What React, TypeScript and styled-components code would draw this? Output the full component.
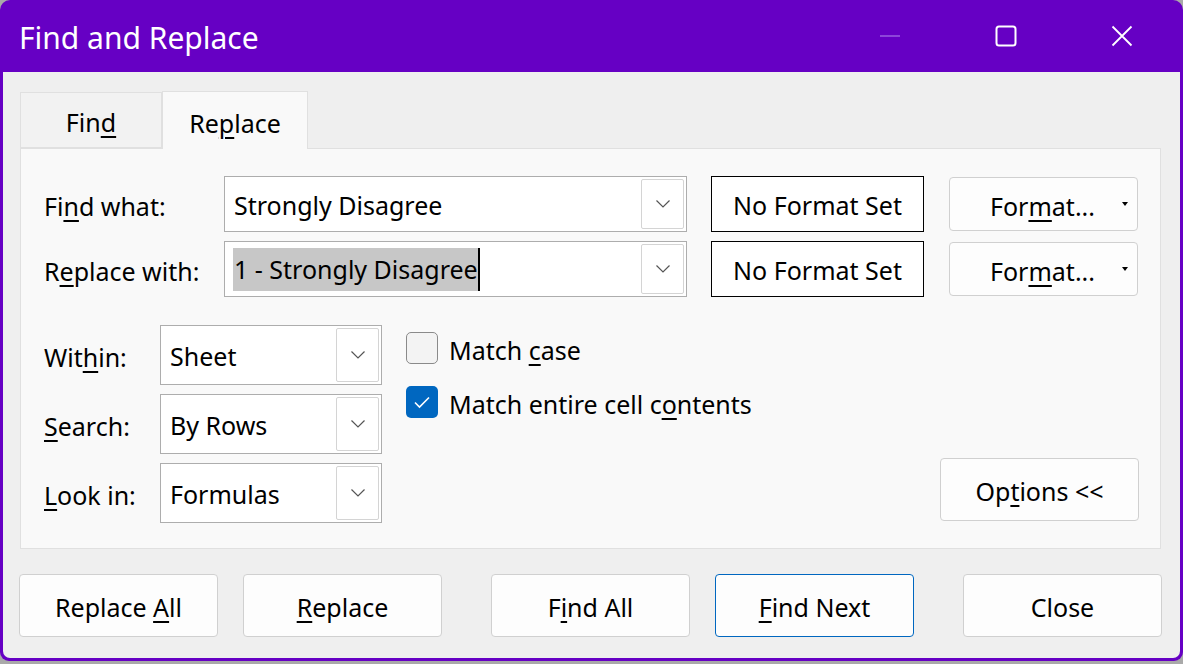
import React from "react";
import styled, { createGlobalStyle } from "styled-components";

const GlobalStyle = createGlobalStyle`
  html, body {
    margin: 0;
    padding: 0;
    background: #a9a9a9;
  }
  body {
    font-family: "Noto Sans", "Open Sans", sans-serif;
    color: #000;
  }
  * {
    box-sizing: border-box;
  }
`;

const Window = styled.div`
  width: 1183px;
  height: 661px;
  display: flex;
  flex-direction: column;
  background: #6600c4;
  border-radius: 10px 10px 9px 9px;
  padding: 0 3px 3px 3px;
`;

const TitleBar = styled.div`
  height: 72px;
  display: flex;
  align-items: center;
  color: #fff;
`;

const Title = styled.div`
  flex: 1;
  padding-left: 16px;
  padding-top: 2px;
  font-size: 30px;
`;

const ControlButton = styled.div`
  width: 116px;
  height: 72px;
  display: flex;
  align-items: center;
  justify-content: center;
  padding-bottom: 1px;
`;

const Body = styled.div`
  flex: 1;
  background: #efefef;
  border-radius: 0 0 7px 7px;
  padding: 19px 19px 0 17px;
  display: flex;
  flex-direction: column;
  font-size: 25px;
`;

const TabRow = styled.div`
  display: flex;
  align-items: flex-end;
  height: 57px;
`;

const Tab = styled.div<{ $active?: boolean }>`
  height: ${({ $active }) => ($active ? "58px" : "56px")};
  width: ${({ $active }) => ($active ? "146px" : "142px")};
  margin-bottom: ${({ $active }) => ($active ? "-1px" : "0")};
  position: relative;
  z-index: ${({ $active }) => ($active ? 1 : 0)};
  background: ${({ $active }) => ($active ? "#f9f9f9" : "#f2f2f2")};
  border: 1px solid #e0e0e0;
  border-bottom: ${({ $active }) => ($active ? "none" : "1px solid #e0e0e0")};
  display: flex;
  align-items: center;
  justify-content: center;
  padding-top: 4px;
`;

const Key = styled.u`
  text-decoration-thickness: 2px;
  text-underline-offset: 4px;
`;

const Panel = styled.div`
  height: 401px;
  background: #f9f9f9;
  border: 1px solid #e0e0e0;
  padding: 27px 21px 0 23px;
`;

const TopGrid = styled.div`
  display: grid;
  grid-template-columns: 156px 463px 213px 1fr;
  grid-auto-rows: 56px;
  column-gap: 24px;
  row-gap: 9px;
  align-items: center;
`;

const Label = styled.div`
  white-space: nowrap;
  padding-top: 3px;
`;

const Combo = styled.div<{ $height?: number }>`
  height: ${({ $height }) => $height ?? 56}px;
  background: #fff;
  border: 1px solid #adadad;
  display: flex;
  align-items: center;
  padding: 2px 2px 2px 9px;
`;

const ComboText = styled.div`
  flex: 1;
  white-space: nowrap;
  padding-top: 1px;
`;

const Selected = styled.span`
  display: inline-block;
  background: #c7c7c7;
  line-height: 43px;
  margin-left: -1px;
  padding-left: 1px;
  border-right: 2px solid #000;
`;

const DropButton = styled.div`
  width: 43px;
  height: 100%;
  border: 1px solid #d4d4d4;
  border-radius: 2px;
  display: flex;
  align-items: center;
  justify-content: center;
  background: #fff;
`;

const FormatBox = styled.div`
  height: 56px;
  border: 1px solid #000;
  background: #fff;
  display: flex;
  align-items: center;
  justify-content: center;
  padding-top: 2px;
  white-space: nowrap;
`;

const Button = styled.div<{ $width?: number; $height?: number; $primary?: boolean }>`
  width: ${({ $width }) => $width ?? 199}px;
  height: ${({ $height }) => $height ?? 63}px;
  background: #fdfdfd;
  border: 1px solid ${({ $primary }) => ($primary ? "#0067c0" : "#d0d0d0")};
  border-radius: 4px;
  display: flex;
  align-items: center;
  justify-content: center;
  padding-top: 3px;
  position: relative;
  white-space: nowrap;
`;

const FormatButton = styled(Button)`
  margin-left: 1px;
  padding-right: 2px;
`;

const Caret = styled.span`
  position: absolute;
  right: 9px;
  top: 24px;
  width: 0;
  height: 0;
  border-left: 3px solid transparent;
  border-right: 3px solid transparent;
  border-top: 4px solid #000;
`;

const LowerSection = styled.div`
  display: flex;
  margin-top: 28px;
`;

const OptionGrid = styled.div`
  display: grid;
  grid-template-columns: 116px 222px;
  grid-auto-rows: 60px;
  row-gap: 9px;
  align-items: center;
`;

const CheckList = styled.div`
  display: flex;
  flex-direction: column;
  gap: 22px;
  margin-left: 24px;
  padding-top: 7px;
`;

const CheckRow = styled.div`
  display: flex;
  align-items: center;
  gap: 11px;
  height: 32px;
  white-space: nowrap;
`;

const Box = styled.div<{ $checked?: boolean }>`
  width: 32px;
  height: 32px;
  border-radius: 5px;
  background: ${({ $checked }) => ($checked ? "#0067c0" : "#f3f3f3")};
  border: ${({ $checked }) => ($checked ? "none" : "1.5px solid #8a8a8a")};
  display: flex;
  align-items: center;
  justify-content: center;
`;

const CheckLabel = styled.span`
  padding-top: 3px;
`;

const OptionsButton = styled(Button)`
  margin-left: auto;
  align-self: flex-end;
  margin-bottom: 2px;
`;

const Footer = styled.div`
  display: flex;
  margin-top: 25px;
  margin-left: -1px;
  gap: 49px;
`;

const ButtonGroup = styled.div`
  display: flex;
  gap: 25px;
`;

const Chevron = () => (
  <svg width="16" height="10" viewBox="0 0 16 10">
    <path d="M1.5 1.5 L8 8 L14.5 1.5" fill="none" stroke="#555" strokeWidth="1.2" />
  </svg>
);

const Check = () => (
  <svg width="18" height="14" viewBox="0 0 18 14">
    <path d="M2 7.5 L6.5 12 L16 2.5" fill="none" stroke="#fff" strokeWidth="1.6" />
  </svg>
);

const Dropdown: React.FC<{ height?: number; children: React.ReactNode }> = ({ height, children }) => (
  <Combo $height={height}>
    <ComboText>{children}</ComboText>
    <DropButton>
      <Chevron />
    </DropButton>
  </Combo>
);

export default function App() {
  return (
    <>
      <GlobalStyle />
      <Window>
        <TitleBar>
          <Title>Find and Replace</Title>
          <ControlButton>
            <svg width="22" height="22" viewBox="0 0 22 22">
              <path d="M1 11 H21" stroke="#9b5ee0" strokeWidth="1.5" />
            </svg>
          </ControlButton>
          <ControlButton>
            <svg width="22" height="22" viewBox="0 0 22 22">
              <rect x="1.5" y="1.5" width="19" height="19" rx="2.5" fill="none" stroke="#fff" strokeWidth="2" />
            </svg>
          </ControlButton>
          <ControlButton>
            <svg width="22" height="22" viewBox="0 0 22 22">
              <path d="M1.5 1.5 L20.5 20.5 M20.5 1.5 L1.5 20.5" stroke="#fff" strokeWidth="1.8" />
            </svg>
          </ControlButton>
        </TitleBar>
        <Body>
          <TabRow>
            <Tab>
              <span>
                Fin<Key>d</Key>
              </span>
            </Tab>
            <Tab $active>
              <span>
                Re<Key>p</Key>lace
              </span>
            </Tab>
          </TabRow>
          <Panel>
            <TopGrid>
              <Label>
                Fi<Key>n</Key>d what:
              </Label>
              <Dropdown>Strongly Disagree</Dropdown>
              <FormatBox>No Format Set</FormatBox>
              <FormatButton $width={189} $height={54}>
                <span>
                  For<Key>m</Key>at...
                </span>
                <Caret />
              </FormatButton>

              <Label>
                R<Key>e</Key>place with:
              </Label>
              <Dropdown>
                <Selected>1 - Strongly Disagree</Selected>
              </Dropdown>
              <FormatBox>No Format Set</FormatBox>
              <FormatButton $width={189} $height={54}>
                <span>
                  For<Key>m</Key>at...
                </span>
                <Caret />
              </FormatButton>
            </TopGrid>

            <LowerSection>
              <OptionGrid>
                <Label>
                  Wit<Key>h</Key>in:
                </Label>
                <Dropdown height={60}>Sheet</Dropdown>
                <Label>
                  <Key>S</Key>earch:
                </Label>
                <Dropdown height={60}>By Rows</Dropdown>
                <Label>
                  <Key>L</Key>ook in:
                </Label>
                <Dropdown height={60}>Formulas</Dropdown>
              </OptionGrid>

              <CheckList>
                <CheckRow>
                  <Box />
                  <CheckLabel>
                    Match <Key>c</Key>ase
                  </CheckLabel>
                </CheckRow>
                <CheckRow>
                  <Box $checked>
                    <Check />
                  </Box>
                  <CheckLabel>
                    Match entire cell c<Key>o</Key>ntents
                  </CheckLabel>
                </CheckRow>
              </CheckList>

              <OptionsButton>
                <span>
                  Op<Key>t</Key>ions &lt;&lt;
                </span>
              </OptionsButton>
            </LowerSection>
          </Panel>

          <Footer>
            <ButtonGroup>
              <Button>
                <span>
                  Replace <Key>A</Key>ll
                </span>
              </Button>
              <Button>
                <span>
                  <Key>R</Key>eplace
                </span>
              </Button>
            </ButtonGroup>
            <ButtonGroup>
              <Button>
                <span>
                  F<Key>i</Key>nd All
                </span>
              </Button>
              <Button $primary>
                <span>
                  <Key>F</Key>ind Next
                </span>
              </Button>
            </ButtonGroup>
            <ButtonGroup>
              <Button>Close</Button>
            </ButtonGroup>
          </Footer>
        </Body>
      </Window>
    </>
  );
}
